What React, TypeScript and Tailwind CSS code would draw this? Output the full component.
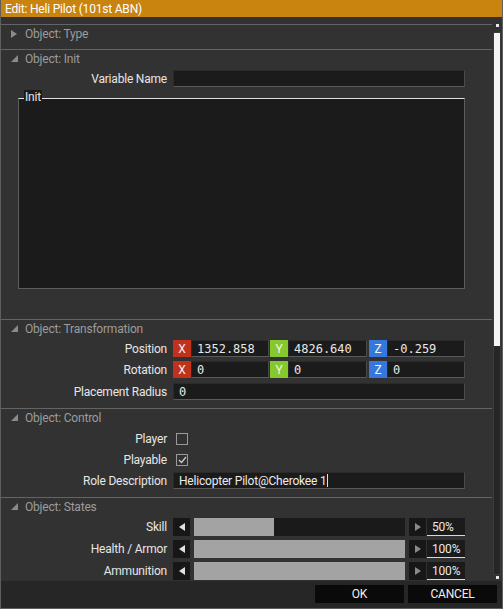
import React from 'react';

const font = { fontFamily: 'Roboto, "Liberation Sans", sans-serif', letterSpacing: '-0.2px' };

function Header({ title, open }: { title: string; open: boolean }) {
  return (
    <div className="border-t border-[#646464] h-[18px] flex items-center text-[12px] text-[#9c9c9c]">
      <span className="w-[24px] flex justify-center pl-[2px]">
        {open ? (
          <svg width="7" height="7" viewBox="0 0 7 7"><path d="M7 0 L7 7 L0 7 Z" fill="#8a8a8a" /></svg>
        ) : (
          <svg width="6" height="8" viewBox="0 0 6 8"><path d="M0 0 L6 4 L0 8 Z" fill="#8a8a8a" /></svg>
        )}
      </span>
      <span>{title}</span>
    </div>
  );
}

function Label({ text }: { text: string }) {
  return <div className="w-[167px] text-right pr-[1px] text-[12px] text-[#e6e6e6]">{text}</div>;
}

function Row({ label, children }: { label: string; children: React.ReactNode }) {
  return (
    <div className="flex items-center h-[17px]">
      <Label text={label} />
      <div className="ml-[5px] w-[292px] flex h-full">{children}</div>
    </div>
  );
}

function Field({ value, className = 'flex-1', mono = false }: { value?: string; className?: string; mono?: boolean }) {
  return (
    <div
      className={`${className} h-full bg-[#1b1b1b] border border-[#2a2a2a] border-b-[#5a5a5a] border-r-[#4a4a4a] flex items-center pl-[5px] text-[#e8e8e8] text-[12px]`}
      style={mono ? { fontFamily: '"DejaVu Sans Mono", monospace', letterSpacing: '0px' } : undefined}
    >
      {value}
    </div>
  );
}

function Axis({ letter, color, value, width }: { letter: string; color: string; value: string; width: string }) {
  return (
    <>
      <div className={`w-[18px] h-full ${color} flex items-center justify-center text-[12px] text-[#f2f2f2]`}>{letter}</div>
      <Field value={value} className={width} mono />
    </>
  );
}

function Check({ checked }: { checked: boolean }) {
  return (
    <div className="ml-[3px] w-[12px] h-[12px] border border-[#9a9a9a] flex items-center justify-center">
      {checked && (
        <svg width="9" height="8" viewBox="0 0 9 8"><path d="M1 4 L3.5 6.5 L8 1" stroke="#d0d0d0" strokeWidth="1.2" fill="none" /></svg>
      )}
    </div>
  );
}

function Slider({ label, pct, text }: { label: string; pct: number; text: string }) {
  return (
    <div className="flex items-center">
      <Label text={label} />
      <div className="ml-[5px] flex h-[18px] w-[292px]">
        <div className="w-[17px] h-full bg-[#171717] flex items-center justify-center">
          <svg width="6" height="8" viewBox="0 0 6 8"><path d="M6 0 L0 4 L6 8 Z" fill="#e0e0e0" /></svg>
        </div>
        <div className="ml-[4px] w-[211px] h-full bg-[#1a1a1a] flex">
          <div className="h-full bg-[#a3a3a3]" style={{ width: `${pct}%` }} />
        </div>
        <div className="ml-[4px] w-[17px] h-full bg-[#171717] flex items-center justify-center">
          <svg width="6" height="8" viewBox="0 0 6 8"><path d="M0 0 L6 4 L0 8 Z" fill="#8a8a8a" /></svg>
        </div>
        <div className="ml-[1px] flex-1 h-full bg-[#1b1b1b] border-b border-[#d8d8d8] flex items-center pl-[5px] text-[12px] text-[#eaeaea]">{text}</div>
      </div>
    </div>
  );
}

export default function App() {
  return (
    <div className="w-[503px] h-[609px] flex flex-col bg-[#2f2f2f] border-x border-[#5e5e5e] overflow-hidden" style={font}>
      <div className="h-[17px] bg-[#c8840f] flex items-center pl-[4px] text-[12px] text-white shrink-0">Edit: Heli Pilot (101st ABN)</div>
      <div className="flex flex-1 min-h-0 bg-[#323232]">
        <div className="flex-1 pt-[7px] overflow-hidden">
          <div className="pb-[7px]">
            <Header title="Object: Type" open={false} />
          </div>
          <div className="pb-[30px]">
            <Header title="Object: Init" open />
            <div className="pt-[3px]">
              <Row label="Variable Name"><Field /></Row>
            </div>
            <div className="ml-[17px] mt-[11px] w-[447px] h-[191px] bg-[#1b1b1b] border border-[#5c5c5c] border-t-[#e0e0e0] relative">
              <span className="absolute -top-[9px] left-[5px] px-[1px] bg-[#1b1b1b] text-[12px] text-[#e6e6e6] leading-[14px]">Init</span>
            </div>
          </div>
          <div className="pb-[8px]">
            <Header title="Object: Transformation" open />
            <div className="pt-[3px] flex flex-col">
              <Row label="Position">
                <Axis letter="X" color="bg-[#c1321e]" value="1352.858" width="w-[78px]" />
                <div className="w-[1px]" />
                <Axis letter="Y" color="bg-[#86c92c]" value="4826.640" width="w-[79px]" />
                <div className="w-[2px]" />
                <Axis letter="Z" color="bg-[#3577dd]" value="-0.259" width="flex-1" />
              </Row>
              <div className="h-[4px]" />
              <Row label="Rotation">
                <Axis letter="X" color="bg-[#c1321e]" value="0" width="w-[78px]" />
                <div className="w-[1px]" />
                <Axis letter="Y" color="bg-[#86c92c]" value="0" width="w-[79px]" />
                <div className="w-[2px]" />
                <Axis letter="Z" color="bg-[#3577dd]" value="0" width="flex-1" />
              </Row>
              <div className="h-[5px]" />
              <Row label="Placement Radius"><Field value="0" mono /></Row>
            </div>
          </div>
          <div className="pb-[8px]">
            <Header title="Object: Control" open />
            <div className="pt-[4px] flex flex-col gap-[4px]">
              <Row label="Player"><div className="flex items-center h-full"><Check checked={false} /></div></Row>
              <Row label="Playable"><div className="flex items-center h-full"><Check checked /></div></Row>
              <Row label="Role Description">
                <div className="flex-1 h-full bg-[#1b1b1b] border border-[#2a2a2a] border-b-[#5a5a5a] border-r-[#4a4a4a] flex items-center pl-[5px] text-[12px] text-[#ececec]">
                  Helicopter Pilot@Cherokee 1<span className="w-[1px] h-[13px] bg-[#e0e0e0]" />
                </div>
              </Row>
            </div>
          </div>
          <div>
            <Header title="Object: States" open />
            <div className="pt-[3px] flex flex-col gap-[4px]">
              <Slider label="Skill" pct={38} text="50%" />
              <Slider label="Health / Armor" pct={100} text="100%" />
              <Slider label="Ammunition" pct={100} text="100%" />
            </div>
          </div>
        </div>
        <div className="w-[10px] flex flex-col items-center pt-[7px] pb-[2px] shrink-0">
          <div className="w-[3px] h-[3px] bg-[#e8e8e8] mb-[5px]" />
          <div className="w-[8px] flex-1 bg-[#262626] border border-[#3c3c3c] flex flex-col">
            <div className="h-[313px] bg-[#f4f4f4]" />
          </div>
          <div className="w-[3px] h-[3px] bg-[#e8e8e8] mt-[1px]" />
        </div>
      </div>
      <div className="h-[28px] bg-[#262626] flex items-start pt-[4px] gap-[4px] pl-[314px] shrink-0 border-b border-[#5e5e5e]">
        <div className="w-[89px] h-[18px] bg-[#0a0a0a] flex items-center justify-center text-[12px] text-[#f0f0f0]">OK</div>
        <div className="w-[89px] h-[18px] bg-[#0a0a0a] flex items-center justify-center text-[12px] text-[#f0f0f0]">CANCEL</div>
      </div>
    </div>
  );
}
